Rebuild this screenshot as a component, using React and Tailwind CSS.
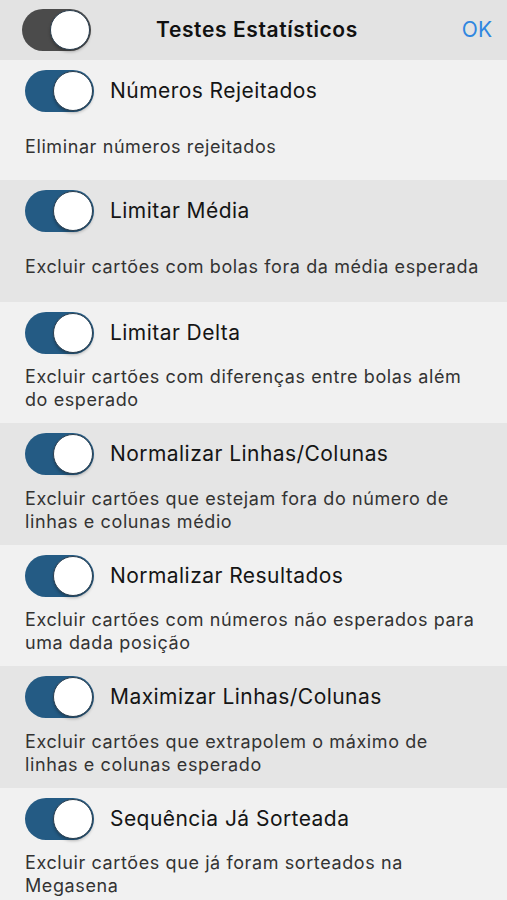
const rows = [
  { title: 'Números Rejeitados', desc: 'Eliminar números rejeitados' },
  { title: 'Limitar Média', desc: 'Excluir cartões com bolas fora da média esperada' },
  { title: 'Limitar Delta', desc: 'Excluir cartões com diferenças entre bolas além do esperado' },
  { title: 'Normalizar Linhas/Colunas', desc: 'Excluir cartões que estejam fora do número de linhas e colunas médio' },
  { title: 'Normalizar Resultados', desc: 'Excluir cartões com números não esperados para uma dada posição' },
  { title: 'Maximizar Linhas/Colunas', desc: 'Excluir cartões que extrapolem o máximo de linhas e colunas esperado' },
  { title: 'Sequência Já Sorteada', desc: 'Excluir cartões que já foram sorteados na Megasena' },
]

const Toggle = ({ dark }) => (
  <div
    className={`relative w-[69px] h-[42px] rounded-full shrink-0 ${dark ? 'bg-[#4b4b4b]' : 'bg-[#245b84]'}`}
  >
    <div className="absolute right-[1px] top-[1px] w-[40px] h-[40px] rounded-full bg-white border-[1.5px] border-[#2b3f50] shadow-[0_2px_3px_rgba(0,0,0,0.25)]" />
  </div>
)

export default function App() {
  return (
    <div
      className="w-[507px] h-[900px] overflow-hidden bg-[#f1f1f1]"
      style={{ fontFamily: 'Inter, "Noto Sans", sans-serif' }}
    >
      {/* cabeçalho */}
      <div className="h-[60px] grid grid-cols-[1fr_auto_1fr] items-center bg-[#e3e3e3] pl-[22px] pr-[15px]">
        <div>
          <Toggle dark />
        </div>
        <h1 className="text-[21px] font-semibold text-[#111] tracking-[0.6px]">Testes Estatísticos</h1>
        <div className="text-right text-[21px] text-[#2f86e0]">OK</div>
      </div>

      {rows.map((row, i) => (
        <div
          key={row.title}
          className={`flex flex-col ${i === 0 ? 'h-[120px]' : 'h-[121.5px]'} ${i % 2 === 1 ? 'bg-[#e5e5e5]' : 'bg-[#f1f1f1]'}`}
        >
          <div className="flex items-center pl-[25px] pt-[10px] gap-[16px]">
            <Toggle />
            <span className="text-[21px] text-[#151515] tracking-[0.45px]">{row.title}</span>
          </div>
          <div className="flex-1 flex items-center pl-[25px] pr-[26px]">
            <p className="text-[18px] leading-[23px] text-[#333] tracking-[0.6px]">{row.desc}</p>
          </div>
        </div>
      ))}
    </div>
  )
}
